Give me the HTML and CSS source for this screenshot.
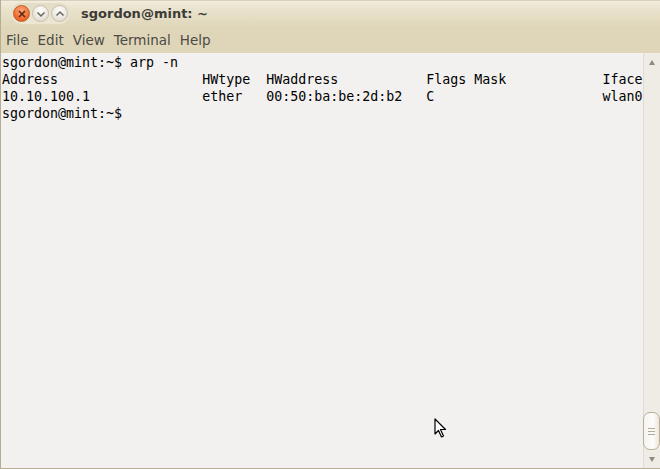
FILE: index.html
```html
<!DOCTYPE html>
<html lang="en">
<head>
    <meta charset="UTF-8">
    <title>sgordon@mint: ~</title>
    <link rel="stylesheet" href="styles.css">
</head>
<body>
    <div class="window">
        <div class="titlebar">
            <div class="buttons">
                <span class="btn close">
                    <svg width="8" height="8" viewBox="0 0 8 8"><path d="M1 1L7 7M7 1L1 7" stroke="#5a2a10" stroke-width="1.6"/></svg>
                </span>
                <span class="btn">
                    <svg width="10" height="8" viewBox="0 0 10 8"><path d="M1.5 2.5L5 6L8.5 2.5" fill="none" stroke="#6b665c" stroke-width="1.5"/></svg>
                </span>
                <span class="btn">
                    <svg width="10" height="8" viewBox="0 0 10 8"><path d="M1.5 5.5L5 2L8.5 5.5" fill="none" stroke="#6b665c" stroke-width="1.5"/></svg>
                </span>
            </div>
            <div class="title">sgordon@mint: ~</div>
        </div>
        <div class="menubar">
            <span>File</span>
            <span>Edit</span>
            <span>View</span>
            <span>Terminal</span>
            <span>Help</span>
        </div>
        <div class="terminal">
<pre class="screen">sgordon@mint:~$ arp -n
Address                  HWtype  HWaddress           Flags Mask            Iface
10.10.100.1              ether   00:50:ba:be:2d:b2   C                     wlan0
sgordon@mint:~$ </pre>
            <div class="scrollbar">
                <div class="arrow up"></div>
                <div class="track">
                    <div class="thumb"><i></i><i></i><i></i></div>
                </div>
                <div class="arrow down"></div>
            </div>
            <svg class="cursor" width="14" height="22" viewBox="0 0 14 22">
                <path d="M1 1L1 16L4.5 12.5L7.5 19L9.5 18L6.5 11.5L11.5 11.5Z" fill="#fff" stroke="#000" stroke-width="1.2" stroke-linejoin="round"/>
            </svg>
        </div>
    </div>
</body>
</html>
```

FILE: styles.css
```css
body {
    margin: 0;
    background: #c9a8c0;
    font-family: "DejaVu Sans", sans-serif;
}
.window {
    width: 659px;
    height: 468px;
    display: flex;
    flex-direction: column;
    border-left: 1px solid #b7ad93;
    border-bottom: 1px solid #b7ad93;
    background: #f2f1f0;
    overflow: hidden;
}
.titlebar {
    height: 27px;
    display: flex;
    align-items: center;
    background: linear-gradient(#bdb49c 0, #f1ecdd 1px, #e9e2cc 10px, #dfd6ba 27px);
}
.buttons {
    display: flex;
    gap: 2px;
    margin-left: 10px;
    padding: 2px 2px;
    border-radius: 10px;
    background: linear-gradient(#e4dcc4, #ece6d4);
}
.btn {
    width: 17px;
    height: 17px;
    border-radius: 50%;
    display: flex;
    align-items: center;
    justify-content: center;
    box-sizing: border-box;
    border: 1px solid #c8bfa8;
    background: radial-gradient(circle at 50% 30%, #ffffff, #e6e2d9 70%, #d4cfc4);
}
.btn.close {
    border-color: #c0602e;
    background: radial-gradient(circle at 50% 30%, #fba77a, #f06a2c 65%, #d85318);
}
.title {
    margin-left: 11px;
    font-weight: bold;
    font-size: 13px;
    color: #3c3b37;
}
.menubar {
    height: 26px;
    display: flex;
    align-items: center;
    padding-left: 5px;
    background: #dfd6ba;
    font-size: 13.5px;
    color: #4c4a44;
}
.menubar span {
    margin-right: 9px;
}
.terminal {
    flex: 1;
    display: flex;
    position: relative;
    background: #f2f1f0;
}
.screen {
    flex: 1;
    margin: 0;
    padding: 1px 0 0 1px;
    font-family: "DejaVu Sans Mono", monospace;
    font-size: 13.3px;
    line-height: 17px;
    color: #000;
    overflow: hidden;
}
.scrollbar {
    width: 16px;
    display: flex;
    flex-direction: column;
    background: #efece6;
    border-left: 1px solid #e2ddd2;
}
.arrow {
    height: 18px;
    display: flex;
    align-items: center;
    justify-content: center;
}
.arrow::before {
    content: "";
    border-left: 3px solid transparent;
    border-right: 3px solid transparent;
}
.arrow.up::before {
    border-bottom: 5px solid #8f8a80;
}
.arrow.down::before {
    border-top: 5px solid #8f8a80;
}
.track {
    flex: 1;
    display: flex;
    flex-direction: column;
    justify-content: flex-end;
}
.thumb {
    height: 36px;
    margin: 0 0 0 -1px;
    border: 1px solid #b9b09a;
    border-radius: 7px;
    background: linear-gradient(90deg, #f6f4ef, #fdfcfa 60%, #ebe7de);
    display: flex;
    flex-direction: column;
    align-items: center;
    justify-content: center;
    gap: 2px;
}
.thumb i {
    width: 7px;
    height: 1px;
    background: #b3aa96;
}
.cursor {
    position: absolute;
    left: 433px;
    top: 365px;
}
```
